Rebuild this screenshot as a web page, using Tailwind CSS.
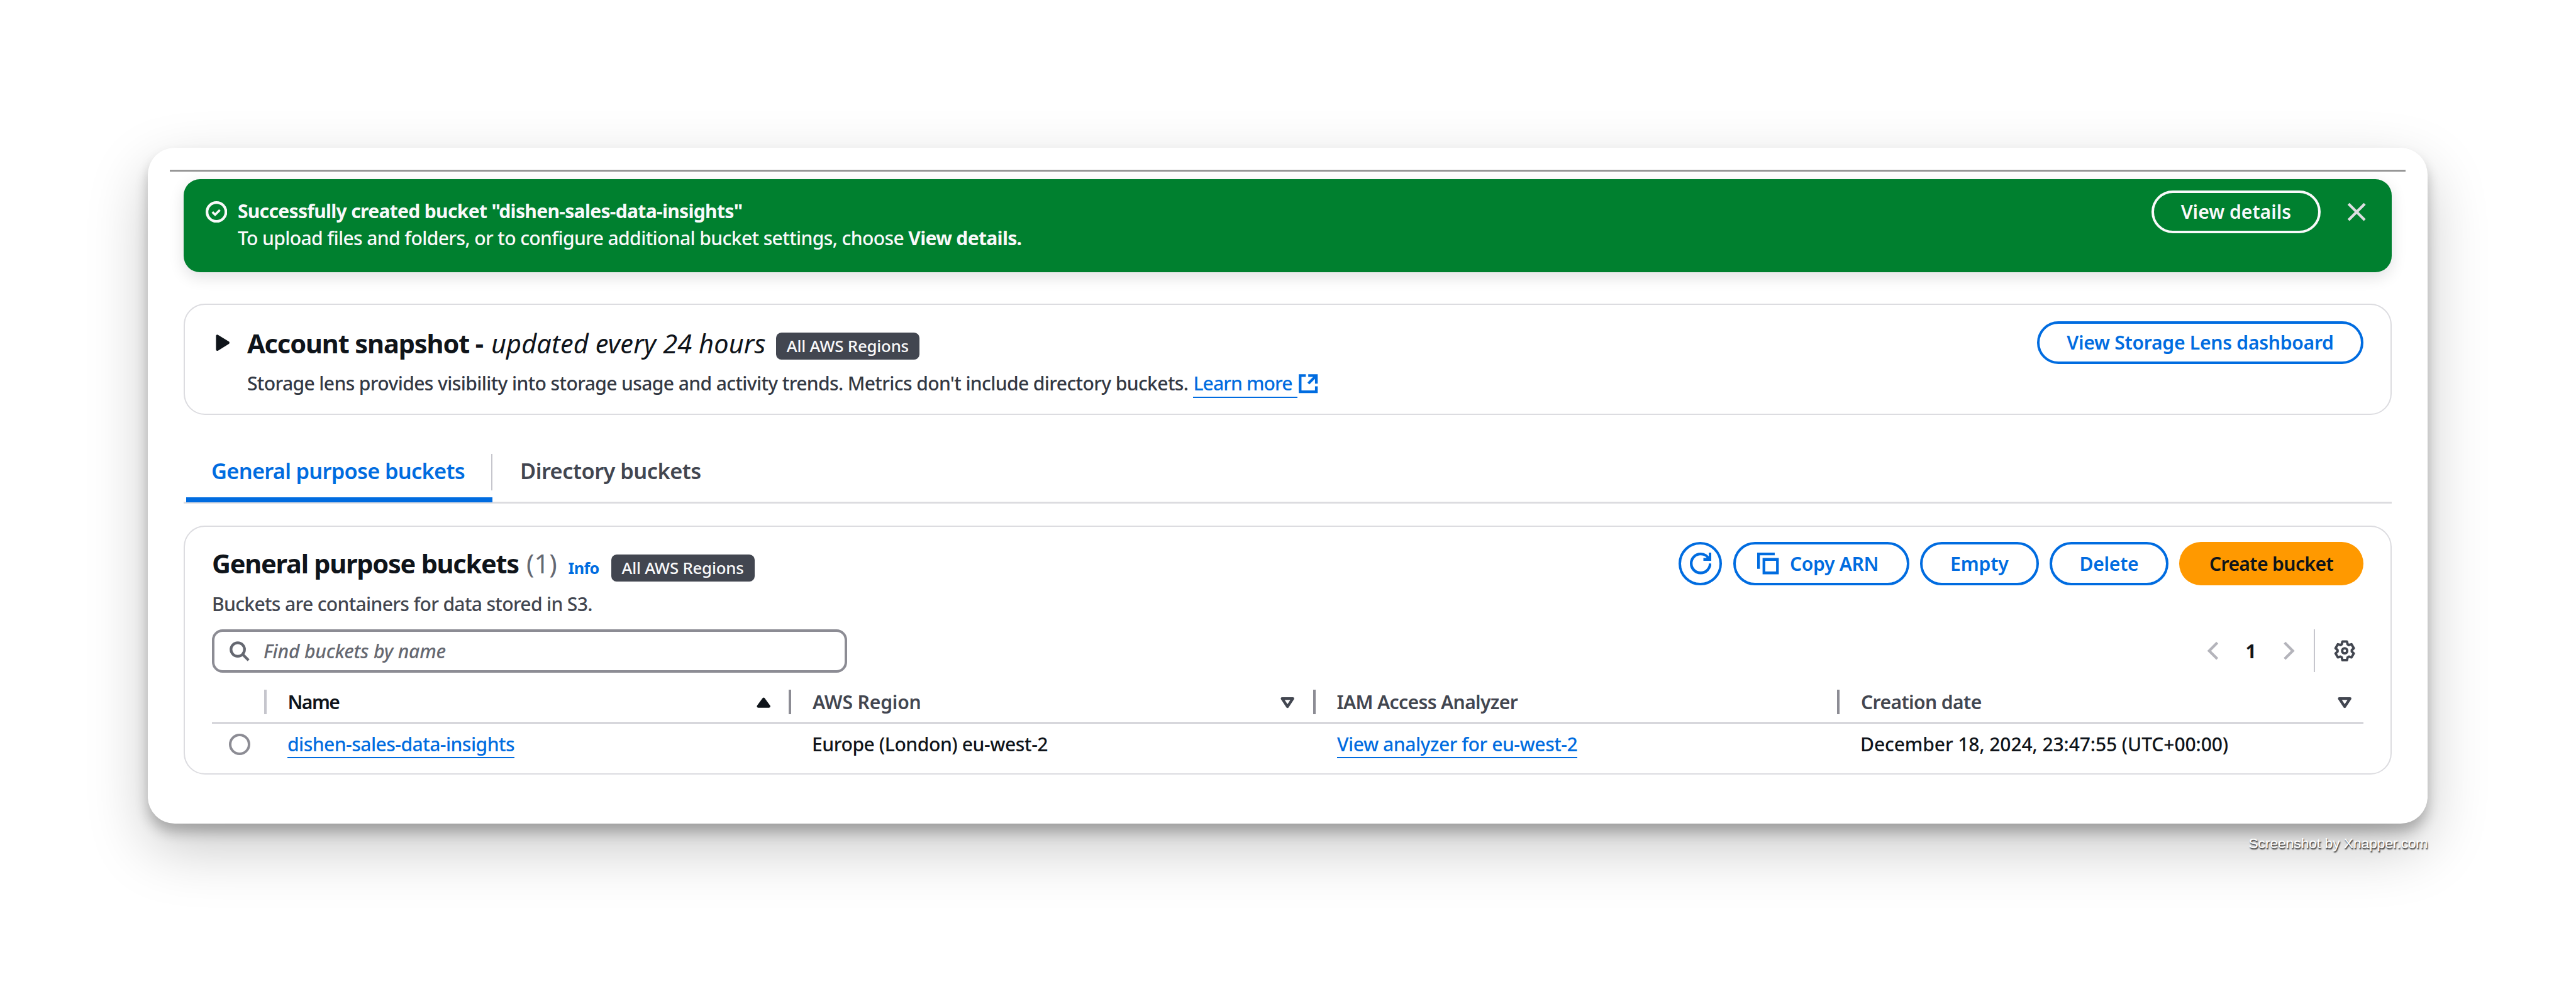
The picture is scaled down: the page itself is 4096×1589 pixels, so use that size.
<!DOCTYPE html>
<html lang="en">
<head>
<meta charset="utf-8">
<title>S3 buckets</title>
<script src="https://cdn.jsdelivr.net/npm/@tailwindcss/browser@4"></script>
</head>
<body class="h-[1589px] w-[4096px] overflow-hidden bg-white pt-[234.5px] pl-[235px] font-['Noto_Sans','Open_Sans',sans-serif] text-[30.1px] leading-[43px] font-medium whitespace-nowrap text-[#0f141a]">
<main class="h-[1075px] w-[3625px] rounded-[43px] bg-white pt-[35.5px] shadow-[0_14px_20px_rgba(0,0,0,0.24),0_38px_96px_rgba(0,0,0,0.22)]">
  <div class="mx-[35px] h-[3px] bg-[#979797]"></div>

  <div class="mx-[57px] mt-[12px] flex h-[147.5px] items-start rounded-[26px] bg-[#00802f] pt-[17.5px] pr-[39px] pl-[35px] text-[#f9f9fa] shadow-[0_8px_24px_rgba(0,7,22,0.12)]">
    <svg class="mt-[17px] size-[34.4px]" viewBox="0 0 16 16" fill="none" stroke="currentColor" stroke-width="2"><circle cx="8" cy="8" r="7"/><path d="m5 8 2 2 3.521-3.521" stroke-width="1.7"/></svg>
    <div class="mt-[11.5px] ml-[16.5px] flex-1">
      <div class="font-bold tracking-[-0.71px]">Successfully created bucket "dishen-sales-data-insights"</div>
      <div class="tracking-[-0.63px]">To upload files and folders, or to configure additional bucket settings, choose <b class="tracking-[-0.7px]">View details.</b></div>
    </div>
    <button class="flex h-[68.5px] w-[269.5px] items-center justify-center rounded-full border-[4.3px] border-[#f9f9fa] font-semibold">View details</button>
    <svg class="mt-[17px] ml-[39.5px] size-[34.4px] text-[#dedee3]" viewBox="0 0 16 16" fill="none" stroke="currentColor" stroke-width="2"><path d="m2 2 12 12M14 2 2 14"/></svg>
  </div>

  <section class="mx-[57px] mt-[50.5px] flex h-[176.5px] items-start rounded-[34px] border-2 border-[#dcdce0] pt-[25.5px] pr-[43px] pl-[42.5px]">
    <svg class="mt-[17px] size-[34.4px]" viewBox="0 0 16 16" fill="currentColor" stroke="currentColor" stroke-width="2" stroke-linejoin="round"><path d="M4 3v10l8-5z"/></svg>
    <div class="ml-[22px] flex-1 pt-[9px]">
      <div class="flex h-[52px] items-start leading-[52px]">
        <h2 class="flex text-[41.5px]"><span class="w-[388px] font-bold tracking-[-1.1px]">Account snapshot -</span><i class="w-[436px] font-normal tracking-[0.12px]">updated every 24 hours</i></h2>
        <span class="mt-[9.5px] ml-[17px] flex h-[43px] w-[228px] items-center justify-center rounded-[8.6px] bg-[#424650] text-[25.8px] leading-[37px] tracking-[-0.2px] text-[#f9f9fa]">All AWS Regions</span>
      </div>
      <p class="mt-[16px] flex tracking-[-0.64px] text-[#333843]"><span class="w-[1504.5px]">Storage lens provides visibility into storage usage and activity trends. Metrics don't include directory buckets.</span>
        <a class="flex text-[#006ce0]"><span class="h-[45px] w-[165.5px] border-b-[2.4px] border-[#006ce0] tracking-[-0.9px]">Learn more</span><svg class="mt-[5.5px] size-[34.4px]" viewBox="0 0 16 16" fill="none" stroke="currentColor" stroke-width="2"><path d="M6.2 2H2v12h12v-4M8 2h6v6M13.7 2.3 8.1 7.9"/></svg></a></p>
    </div>
    <button class="flex h-[68.5px] w-[519px] items-center justify-center rounded-full border-[4.3px] border-[#006ce0] font-semibold tracking-[-0.27px] text-[#006ce0]">View Storage Lens dashboard</button>
  </section>

  <nav class="mx-[57px] mt-[62px] flex h-[79.5px] items-start border-b-[3px] border-[#dcdce0] pl-[4px] text-[34.4px] leading-[48px] font-semibold">
    <div class="flex h-[77px] w-[487px] items-start justify-between rounded-t-[3px] border-b-8 border-[#006ce0] pl-[40px] tracking-[-0.71px] text-[#006ce0]"><span class="mt-[3px]">General purpose buckets</span><span class="h-[58px] w-[2px] bg-[#c6c6cd]"></span></div>
    <span class="mt-[3px] ml-[44px] tracking-[-0.51px] text-[#424650]">Directory buckets</span>
  </nav>

  <section class="mx-[57px] mt-[34.5px] h-[396.5px] rounded-[34px] border-2 border-[#dcdce0] px-[43px] pt-[24.5px]">
    <div class="flex items-start">
      <div class="flex-1 pt-[8px]">
        <div class="flex h-[52px] items-start leading-[52px]">
          <h2 class="w-[500px] text-[41.5px] font-bold tracking-[-1.25px]">General purpose buckets</h2>
          <span class="w-[66.5px] text-[41.5px] font-normal text-[#656871]">(1)</span>
          <span class="mt-[7px] w-[68px] text-[25.2px] font-bold tracking-[-0.6px] text-[#006ce0]">Info</span>
          <span class="mt-[11.5px] flex h-[43px] w-[228px] items-center justify-center rounded-[8.6px] bg-[#424650] text-[25.8px] leading-[37px] tracking-[-0.2px] text-[#f9f9fa]">All AWS Regions</span>
        </div>
        <p class="mt-[16.5px] tracking-[-0.68px] text-[#424650]">Buckets are containers for data stored in S3.</p>
      </div>
      <div class="flex h-[69px] gap-[17.3px] font-semibold text-[#006ce0]">
        <button class="flex w-[69px] items-center justify-center rounded-full border-[4.3px] border-[#006ce0]"><svg class="size-[34.4px]" viewBox="0 0 16 16" fill="none" stroke="currentColor" stroke-width="2"><path d="M10 5h5V0M15 8a6.957 6.957 0 0 1-7 7 6.957 6.957 0 0 1-7-7 6.957 6.957 0 0 1 7-7 6.87 6.87 0 0 1 6.3 4"/></svg></button>
        <button class="flex w-[280px] items-center rounded-full border-[4.3px] border-[#006ce0] pl-[34.5px] tracking-[-0.33px]"><svg class="mr-[17.5px] size-[34.4px]" viewBox="0 0 16 16" fill="none" stroke="currentColor" stroke-width="2"><path d="M1 12V1h12M5 5h10v10H5z"/></svg>Copy ARN</button>
        <button class="flex w-[189px] items-center justify-center rounded-full border-[4.3px] border-[#006ce0] tracking-[-0.1px]">Empty</button>
        <button class="flex w-[188.5px] items-center justify-center rounded-full border-[4.3px] border-[#006ce0] tracking-[-0.29px]">Delete</button>
        <button class="flex w-[293px] items-center justify-center rounded-full bg-[#ff9900] tracking-[-0.63px] text-[#0f141a]">Create bucket</button>
      </div>
    </div>
    <div class="mt-[19px] flex h-[69px] items-center">
      <div class="flex h-[69px] w-[1009.5px] items-center rounded-[17px] border-[4.3px] border-[#8c8c94] pl-[21.5px] text-[#656871]">
        <svg class="mr-[22px] size-[34.4px]" viewBox="0 0 16 16" fill="none" stroke="currentColor" stroke-width="2"><circle cx="7" cy="7" r="5"/><path d="m15 15-4.5-4.5"/></svg>
        <i class="tracking-[-0.19px]">Find buckets by name</i>
      </div>
      <svg class="ml-auto size-[34.4px] text-[#b4b4bb]" viewBox="0 0 16 16" fill="none" stroke="currentColor" stroke-width="2"><path d="m11 2-6 6 6 6"/></svg>
      <span class="w-[85px] text-center font-bold">1</span>
      <svg class="size-[34.4px] text-[#b4b4bb]" viewBox="0 0 16 16" fill="none" stroke="currentColor" stroke-width="2"><path d="m5 2 6 6-6 6"/></svg>
      <span class="mr-[29.5px] ml-[23px] h-[68px] w-[2px] bg-[#c6c6cd]"></span>
      <svg class="mr-[13px] size-[34.4px] text-[#424650]" viewBox="0 0 16 16" fill="none" stroke="currentColor" stroke-width="1.8" stroke-linejoin="round"><g transform="translate(8 8)"><path d="M-1.69-6.9H1.69L2.16-4.84 3.12-4.29 5.04-4.86 6.73-1.93 5.27-.55V.55L6.73 1.93 5.04 4.86 3.12 4.29 2.16 4.84 1.69 6.9H-1.69L-2.16 4.84-3.12 4.29-5.04 4.86-6.73 1.93-5.27.55V-.55L-6.73-1.93-5.04-4.86-3.12-4.29-2.16-4.84z"/><circle r="1.9"/></g></svg>
    </div>

    <div class="mt-[14px] grid h-[67px] grid-cols-[87px_834px_833.5px_833.5px_1fr] items-center border-b-2 border-[#c6c6cd] font-semibold text-[#424650]">
      <div class="flex h-[39px] justify-end"><span class="w-[4.5px] bg-[#c6c6cd]"></span></div>
      <div class="flex h-[39px] items-center pl-[33.5px] text-[#0f141a]"><span class="flex-1 tracking-[-1.5px]">Name</span>
        <svg class="mr-[22.5px] size-[34.4px]" viewBox="0 0 16 16" fill="currentColor" stroke="currentColor" stroke-width="2" stroke-linejoin="round"><path d="M4 11.4h8L8 6z"/></svg>
        <span class="h-[39px] w-[4px] bg-[#8c8c94]"></span></div>
      <div class="flex h-[39px] items-center pl-[34px]"><span class="flex-1 tracking-[-0.15px]">AWS Region</span>
        <svg class="mr-[23.5px] size-[34.4px]" viewBox="0 0 16 16" fill="none" stroke="currentColor" stroke-width="2" stroke-linejoin="round"><path d="M4 5.6h8L8 11.6z"/></svg>
        <span class="h-[39px] w-[4px] bg-[#8c8c94]"></span></div>
      <div class="flex h-[39px] items-center pl-[34px]"><span class="flex-1 tracking-[-0.65px]">IAM Access Analyzer</span>
        <span class="h-[39px] w-[4px] bg-[#8c8c94]"></span></div>
      <div class="flex h-[39px] items-center pl-[34px]"><span class="flex-1 tracking-[-0.6px]">Creation date</span>
        <svg class="mr-[13px] size-[34.4px]" viewBox="0 0 16 16" fill="none" stroke="currentColor" stroke-width="2" stroke-linejoin="round"><path d="M4 5.6h8L8 11.6z"/></svg></div>
    </div>
    <div class="grid h-[65px] grid-cols-[87px_834px_833.5px_833.5px_1fr] items-start pt-[11px]">
      <span class="mt-[5px] ml-[26.5px] size-[34.5px] rounded-full border-[4.3px] border-[#8c8c94]"></span>
      <div class="pl-[33px]"><a class="inline-block h-[44px] border-b-[2.4px] border-[#006ce0] tracking-[-0.55px] text-[#006ce0]">dishen-sales-data-insights</a></div>
      <div class="pl-[33px] tracking-[-0.44px]">Europe (London) eu-west-2</div>
      <div class="pl-[34.5px]"><a class="inline-block h-[44px] border-b-[2.4px] border-[#006ce0] tracking-[-0.47px] text-[#006ce0]">View analyzer for eu-west-2</a></div>
      <div class="pl-[33px] tracking-[-0.12px]">December 18, 2024, 23:47:55 (UTC+00:00)</div>
    </div>
  </section>
</main>
<footer class="mt-[18px] w-[3625.5px] text-right font-['Liberation_Sans',sans-serif] text-[22.7px] leading-[26px] font-normal text-white [text-shadow:1px_2px_2px_rgba(0,0,0,0.9)]">Screenshot by Xnapper.com</footer>
</body>
</html>
